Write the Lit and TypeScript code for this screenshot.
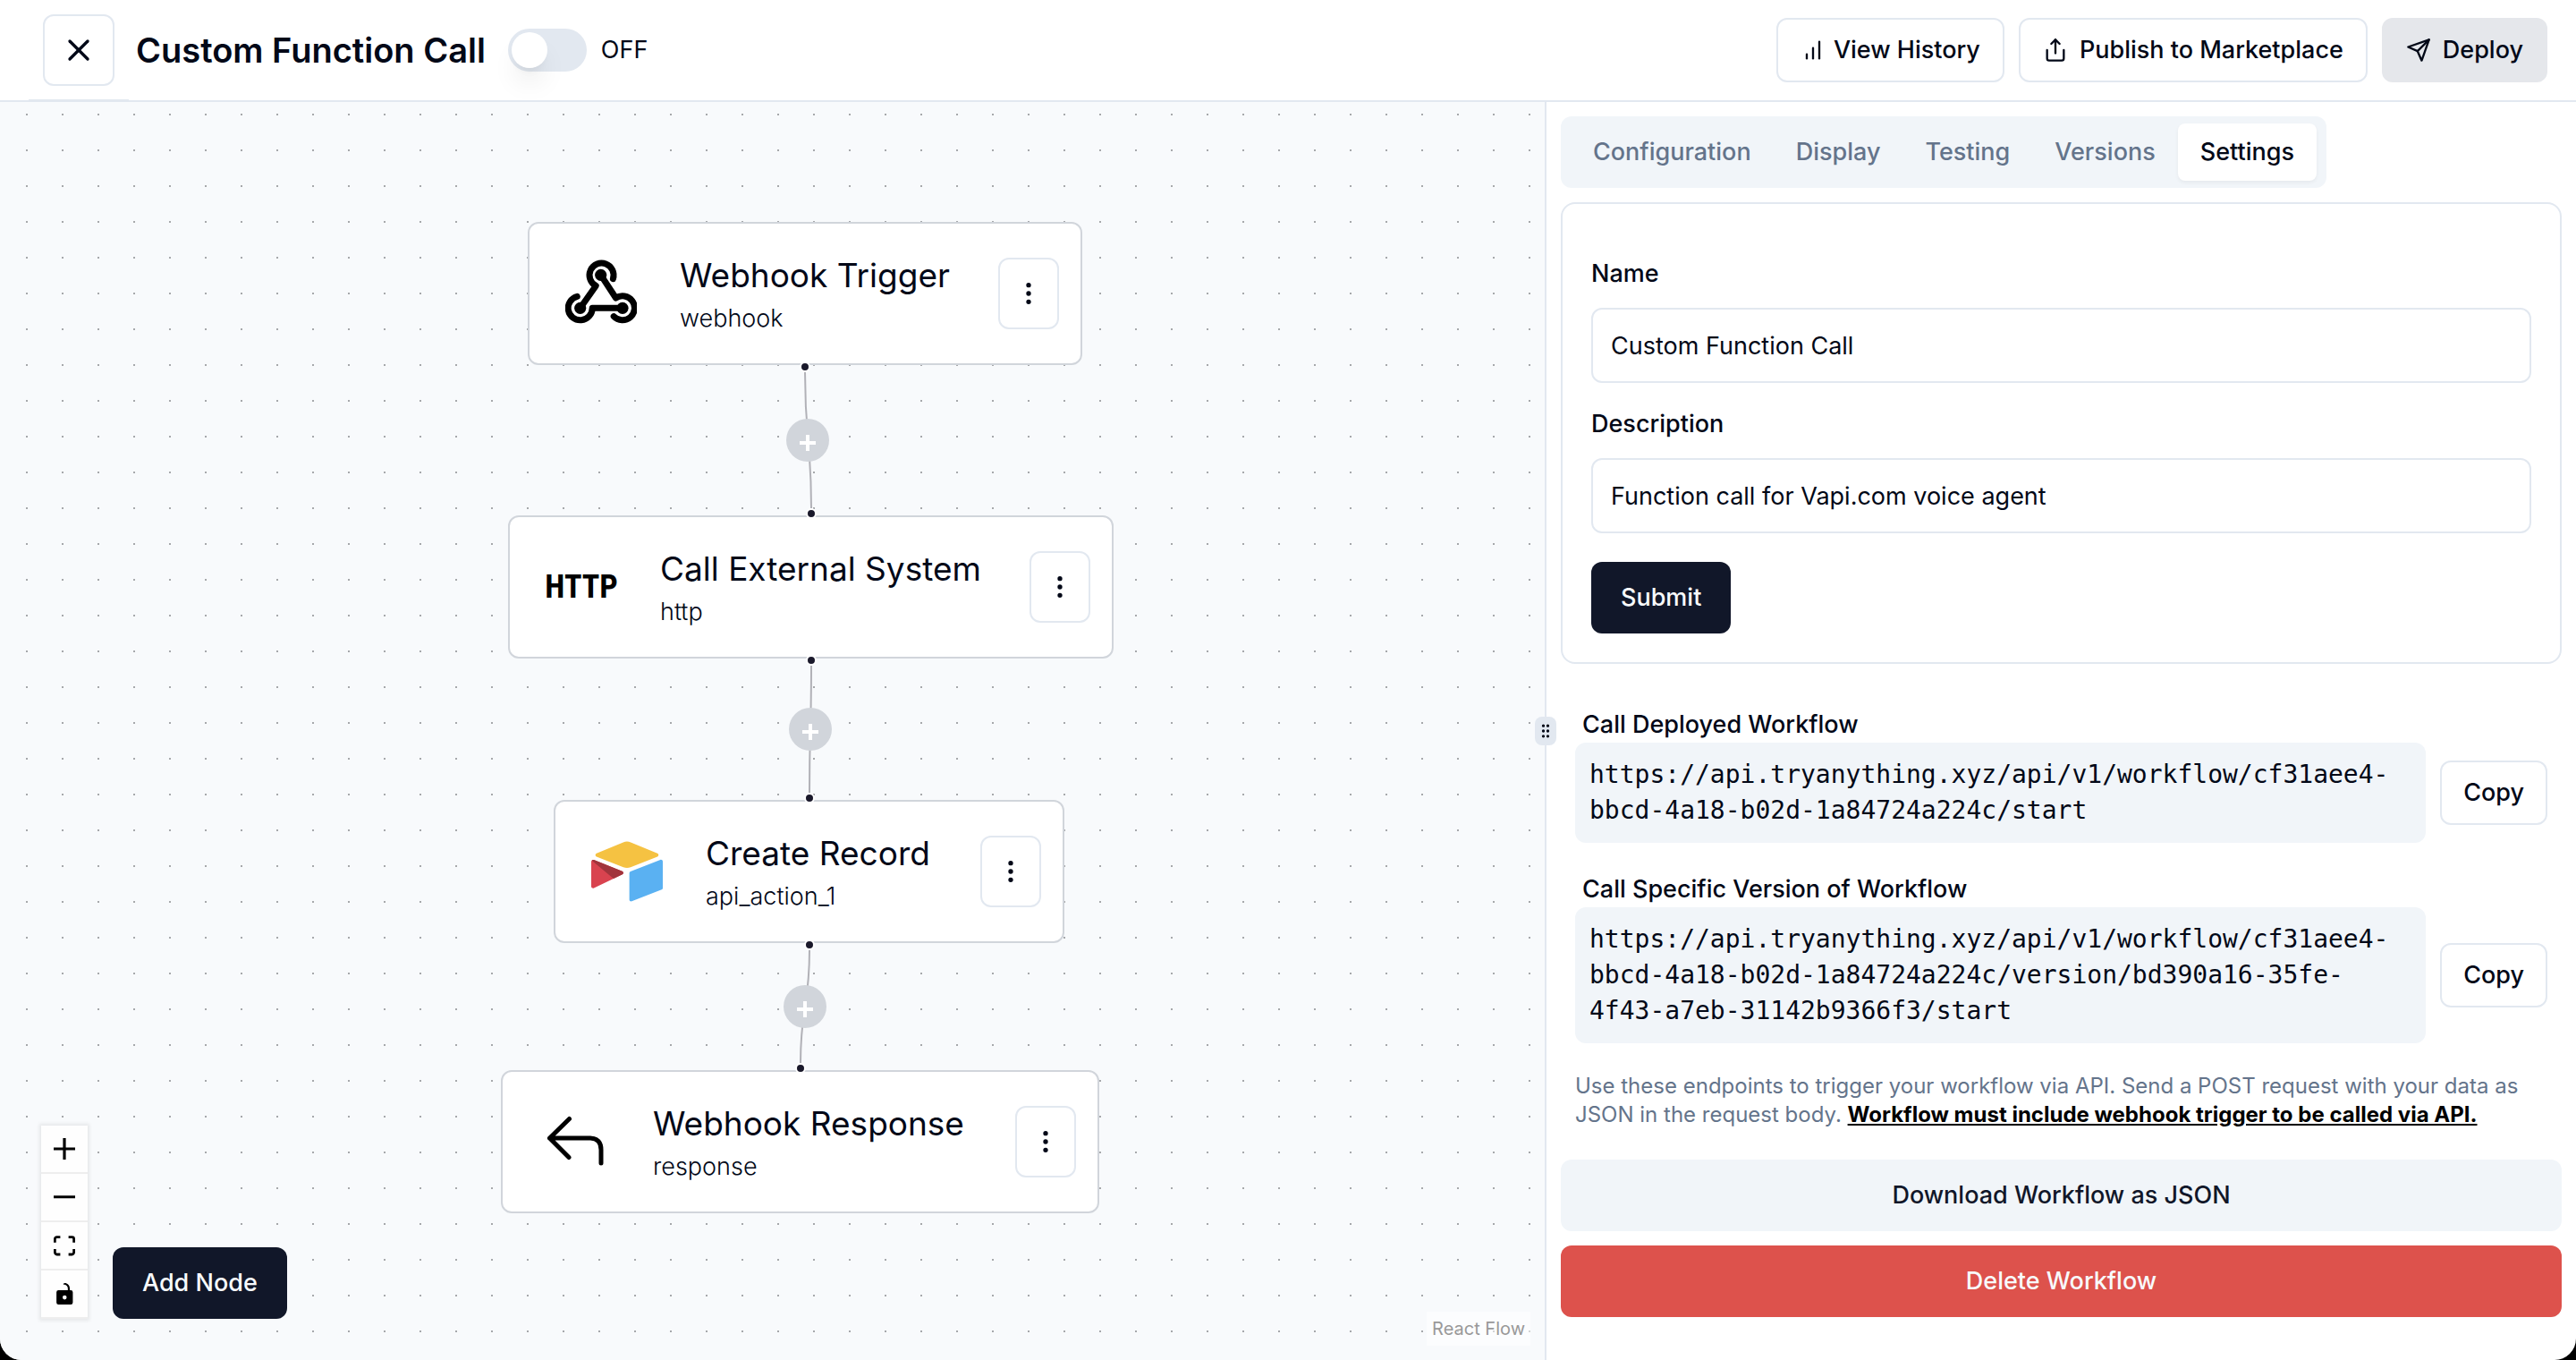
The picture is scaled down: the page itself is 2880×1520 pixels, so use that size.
import { LitElement, html, css, svg, nothing } from "lit";
import { customElement, property, state } from "lit/decorators.js";
import { styleMap } from "lit/directives/style-map.js";
import { classMap } from "lit/directives/class-map.js";

type NodeKind = "webhook" | "http" | "airtable" | "response";

interface FlowNode {
  kind: NodeKind;
  title: string;
  id: string;
  x: number;
  y: number;
  width: number;
}

interface FlowEdge {
  x1: number;
  y1: number;
  x2: number;
  y2: number;
}

const NODES: FlowNode[] = [
  { kind: "webhook", title: "Webhook Trigger", id: "webhook", x: 590, y: 134, width: 620 },
  { kind: "http", title: "Call External System", id: "http", x: 568, y: 462, width: 677 },
  { kind: "airtable", title: "Create Record", id: "api_action_1", x: 619, y: 780, width: 571 },
  { kind: "response", title: "Webhook Response", id: "response", x: 560, y: 1082, width: 669 },
];

const EDGES: FlowEdge[] = [
  { x1: 900, y1: 296, x2: 907, y2: 460 },
  { x1: 907, y1: 624, x2: 905, y2: 778 },
  { x1: 905, y1: 942, x2: 895, y2: 1080 },
];

const TABS = ["Configuration", "Display", "Testing", "Versions", "Settings"];

const resets = css`
  * {
    box-sizing: border-box;
  }
  button,
  input {
    font: inherit;
    color: inherit;
    margin: 0;
  }
  button {
    cursor: pointer;
    border: 0;
    padding: 0;
    background: none;
  }
  svg {
    display: block;
    flex: none;
  }
`;

const stroked = (size: number, body: unknown) => html`
  <svg width=${size} height=${size} viewBox="0 0 24 24" fill="none" stroke="currentColor"
    stroke-width="2" stroke-linecap="round" stroke-linejoin="round" aria-hidden="true">${body}</svg>
`;

const icons = {
  close: () => stroked(40, svg`<path d="M18 6 6 18"/><path d="m6 6 12 12"/>`),
  history: () => stroked(28, svg`<path d="M12 20V10"/><path d="M18 20V4"/><path d="M6 20v-4"/>`),
  publish: () =>
    stroked(28, svg`<path d="M4 12v8a2 2 0 0 0 2 2h12a2 2 0 0 0 2-2v-8"/><path d="m16 6-4-4-4 4"/><path d="M12 2v13"/>`),
  deploy: () => stroked(28, svg`<path d="m22 2-7 20-4-9-9-4Z"/><path d="M22 2 11 13"/>`),
  more: () =>
    stroked(32, svg`<circle cx="12" cy="12" r="1"/><circle cx="12" cy="5" r="1"/><circle cx="12" cy="19" r="1"/>`),
  grip: () =>
    stroked(20, svg`<circle cx="9" cy="12" r="1"/><circle cx="9" cy="5" r="1"/><circle cx="9" cy="19" r="1"/><circle cx="15" cy="12" r="1"/><circle cx="15" cy="5" r="1"/><circle cx="15" cy="19" r="1"/>`),
};

const webhookIcon = html`
  <svg width="80" height="80" viewBox="0 0 80 80" fill="none" stroke="#000" stroke-width="7"
    stroke-linecap="round" stroke-linejoin="round" aria-hidden="true">
    <path d="M53.4 23.6A13.5 13.5 0 1 0 34.2 31.4L16.7 56.3" />
    <path d="M39.7 19.3 56.5 45A13.5 13.5 0 1 1 54.2 65.6" />
    <path d="M64 56.3H30.2A13.5 13.5 0 1 1 13.3 43.3" />
    <circle cx="39.7" cy="19.3" r="6.6" fill="#000" stroke="none" />
    <circle cx="16.7" cy="56.3" r="6.6" fill="#000" stroke="none" />
    <circle cx="64" cy="56.3" r="6.6" fill="#000" stroke="none" />
  </svg>
`;

const airtableIcon = html`
  <svg width="80" height="68" viewBox="11 10 177 149" aria-hidden="true">
    <path fill="#f5c242" d="M90.04 12.37 24.08 39.66c-3.67 1.52-3.63 6.73.06 8.19l66.24 26.27c5.82 2.3 12.3 2.3 18.12 0l66.23-26.27c3.69-1.46 3.73-6.67.06-8.19l-65.96-27.29c-6.02-2.49-12.78-2.49-18.79 0" />
    <path fill="#5ab1f2" d="M105.31 88.46v65.62c0 3.12 3.15 5.25 6.05 4.1l73.81-28.64a4.42 4.42 0 0 0 2.79-4.11V59.81c0-3.12-3.15-5.25-6.05-4.1L108.1 84.35a4.42 4.42 0 0 0-2.79 4.11" />
    <path fill="#d9434f" d="m88.08 91.85-21.9 10.57-2.23 1.08-46.24 22.15c-2.93 1.41-6.67-.72-6.67-3.98V60.09c0-1.18.6-2.2 1.42-2.96.34-.34.72-.62 1.12-.84 1.1-.67 2.68-.84 4.02-.31l70.11 27.78c3.56 1.41 3.84 6.41.37 8.09" />
    <path fill="#a1343c" d="m88.08 91.85-21.9 10.57-53.72-45.29c.34-.34.72-.62 1.12-.84 1.1-.67 2.68-.84 4.02-.31l70.11 27.78c3.56 1.41 3.84 6.41.37 8.09" />
  </svg>
`;

const responseIcon = html`
  <svg width="80" height="80" viewBox="0 0 80 80" fill="none" stroke="#000" stroke-width="5"
    stroke-linecap="round" stroke-linejoin="round" aria-hidden="true">
    <path d="M34.5 14.5 12.5 36 34 57.5M12.5 36H58C66 36 70 41 70 49V64" />
  </svg>
`;

@customElement("flow-node")
export class FlowNodeElement extends LitElement {
  @property({ attribute: false }) node!: FlowNode;

  static styles = [
    resets,
    css`
      :host {
        display: block;
      }
      .node {
        display: flex;
        align-items: center;
        height: 160px;
        padding: 0 24px 0 40px;
        border: 2px solid #d1d5db;
        border-radius: 12px;
        background: #fff;
      }
      .art {
        width: 80px;
        display: flex;
        justify-content: center;
        flex: none;
      }
      .wordmark {
        font: 700 36px/40px "Liberation Sans Narrow", "Roboto Condensed", sans-serif;
        color: #000;
      }
      .text {
        flex: 1;
        min-width: 0;
        margin-left: 48px;
        white-space: nowrap;
      }
      .title {
        margin: 0;
        font-size: 37px;
        line-height: 56px;
        font-weight: 400;
      }
      .id {
        margin: 0;
        font-weight: 300;
        line-height: 40px;
      }
      .more {
        width: 68px;
        height: 80px;
        display: grid;
        place-items: center;
        border: 2px solid #e2e8f0;
        border-radius: 12px;
        background: #fff;
      }
    `,
  ];

  private art(kind: NodeKind) {
    switch (kind) {
      case "webhook":
        return webhookIcon;
      case "http":
        return html`<span class="wordmark">HTTP</span>`;
      case "airtable":
        return airtableIcon;
      case "response":
        return responseIcon;
      default:
        return nothing;
    }
  }

  render() {
    return html`
      <article class="node">
        <div class="art">${this.art(this.node.kind)}</div>
        <div class="text">
          <h2 class="title">${this.node.title}</h2>
          <p class="id">${this.node.id}</p>
        </div>
        <button class="more" type="button" aria-label="Node options">${icons.more()}</button>
      </article>
    `;
  }
}

@customElement("flow-canvas")
export class FlowCanvas extends LitElement {
  static styles = [
    resets,
    css`
      :host {
        display: block;
        position: relative;
        overflow: hidden;
        background: #f8fafc;
      }
      .layer {
        position: absolute;
        inset: 0;
        width: 100%;
        height: 100%;
        pointer-events: none;
      }
      .placed {
        position: absolute;
      }
      .add {
        position: absolute;
        width: 48px;
        height: 48px;
        border-radius: 50%;
        background: #d1d5db;
        color: #fff;
        display: grid;
        place-items: center;
        transform: translate(-50%, -50%);
      }
      .dock {
        position: absolute;
        left: 46px;
        bottom: 46px;
        display: flex;
        align-items: flex-end;
        gap: 28px;
      }
      .controls {
        display: flex;
        flex-direction: column;
        box-shadow: 0 0 4px 2px rgba(0, 0, 0, 0.08);
      }
      .control {
        width: 52px;
        height: 54px;
        display: grid;
        place-items: center;
        background: #fefefe;
        border-bottom: 2px solid #eee;
      }
      .add-node {
        height: 80px;
        padding: 0 33px;
        border-radius: 12px;
        background: #111729;
        color: #f8fafc;
        font-weight: 500;
      }
      .credit {
        position: absolute;
        right: 16px;
        bottom: 16px;
        padding: 4px 6px;
        background: rgba(255, 255, 255, 0.5);
        font-size: 20px;
        line-height: 30px;
        color: #999;
        text-decoration: none;
      }
    `,
  ];

  render() {
    return html`
      <svg class="layer" aria-hidden="true">
        <defs>
          <pattern id="dots" width="40" height="40" patternUnits="userSpaceOnUse">
            <rect x="29" y="13" width="2" height="2" fill="#a6a8ab" />
          </pattern>
        </defs>
        <rect width="100%" height="100%" fill="url(#dots)" />
        ${EDGES.map((e) => {
          const mid = (e.y1 + e.y2) / 2;
          return svg`<path fill="none" stroke="#b1b1b7" stroke-width="2"
            d="M${e.x1} ${e.y1 + 6}C${e.x1} ${mid} ${e.x2} ${mid} ${e.x2} ${e.y2 - 6}"/>`;
        })}
      </svg>
      ${NODES.map(
        (n) => html`<flow-node class="placed" .node=${n}
          style=${styleMap({ left: `${n.x}px`, top: `${n.y}px`, width: `${n.width}px` })}></flow-node>`,
      )}
      <svg class="layer" aria-hidden="true">
        ${EDGES.map((e) =>
          [
            [e.x1, e.y1],
            [e.x2, e.y2],
          ].map(([x, y]) => svg`<circle cx=${x} cy=${y} r="5" fill="#1a192b" stroke="#fff" stroke-width="2"/>`),
        )}
      </svg>
      ${EDGES.map(
        (e) => html`<button class="add" type="button" aria-label="Insert node"
          style=${styleMap({ left: `${Math.floor((e.x1 + e.x2) / 2)}px`, top: `${Math.round((e.y1 + e.y2) / 2)}px` })}>
          <svg width="18" height="24" viewBox="0 0 18 24" aria-hidden="true">
            <path d="M7 6h4v7h7v4h-7v7H7v-7H0v-4h7z" fill="#fff" />
          </svg>
        </button>`,
      )}
      <div class="dock">
        <div class="controls">
          <button class="control" type="button" aria-label="Zoom in">
            <svg width="24" height="24" viewBox="0 0 32 32"><path d="M32 18.133H18.133V32h-4.266V18.133H0v-4.266h13.867V0h4.266v13.867H32z" /></svg>
          </button>
          <button class="control" type="button" aria-label="Zoom out">
            <svg width="24" height="4" viewBox="0 0 32 5"><path d="M0 0h32v4.2H0z" /></svg>
          </button>
          <button class="control" type="button" aria-label="Fit view">
            <svg width="24" height="23" viewBox="0 0 32 30"><path d="M3.692 4.63c0-.53.4-.938.939-.938h5.215V0H4.708C2.13 0 0 2.054 0 4.63v5.216h3.692V4.631zM27.354 0h-5.2v3.692h5.17c.53 0 .984.4.984.939v5.215H32V4.631A4.624 4.624 0 0027.354 0zm.954 24.83c0 .532-.4.94-.939.94h-5.215v3.768h5.215c2.577 0 4.631-2.13 4.631-4.707v-5.139h-3.692v5.139zm-23.677.94c-.531 0-.939-.4-.939-.94v-5.138H0v5.139c0 2.577 2.13 4.707 4.708 4.707h5.138V25.77H4.631z" /></svg>
          </button>
          <button class="control" type="button" aria-label="Toggle interactivity">
            <svg width="19" height="24" viewBox="0 0 25 32"><path d="M21.333 10.667H19.81V7.619C19.81 3.429 16.38 0 12.19 0c-4.114 1.828-1.37 2.133.305 2.438 1.676.305 4.42 2.59 4.42 5.181v3.048H3.047A3.056 3.056 0 000 13.714v15.238A3.056 3.056 0 003.048 32h18.285a3.056 3.056 0 003.048-3.048V13.714a3.056 3.056 0 00-3.048-3.047zM12.19 24.533a3.056 3.056 0 01-3.047-3.047 3.056 3.056 0 013.047-3.048 3.056 3.056 0 013.048 3.048 3.056 3.056 0 01-3.048 3.047z" /></svg>
          </button>
        </div>
        <button class="add-node" type="button">Add Node</button>
      </div>
      <a class="credit" href="#reactflow">React Flow</a>
    `;
  }
}

@customElement("settings-panel")
export class SettingsPanel extends LitElement {
  @state() private tab = "Settings";

  static styles = [
    resets,
    css`
      :host {
        display: block;
        background: #fff;
      }
      .panel {
        display: flex;
        flex-direction: column;
        align-items: stretch;
        padding: 16px;
      }
      .tabs {
        align-self: flex-start;
        display: flex;
        padding: 8px 11px;
        border-radius: 12px;
        background: #f1f5f9;
      }
      .tab {
        height: 64px;
        padding: 0 25px;
        border-radius: 8px;
        font-weight: 500;
        color: #64748b;
      }
      .tab.active {
        background: #fff;
        color: #020817;
        box-shadow: 0 2px 4px rgba(0, 0, 0, 0.05);
      }
      .card {
        display: flex;
        flex-direction: column;
        align-items: flex-start;
        gap: 32px;
        margin: 16px 0 0;
        padding: 64px 32px 32px;
        border: 2px solid #e2e8f0;
        border-radius: 16px;
      }
      .field {
        width: 100%;
        display: flex;
        flex-direction: column;
        gap: 24px;
      }
      .label {
        line-height: 28px;
        font-weight: 500;
      }
      .input {
        width: 100%;
        height: 84px;
        padding: 0 20px;
        border: 2px solid #e2e8f0;
        border-radius: 12px;
        background: #fff;
      }
      .submit {
        height: 80px;
        padding: 0 33px;
        border-radius: 12px;
        background: #111729;
        color: #f8fafc;
        font-weight: 500;
      }
      .endpoints {
        display: flex;
        flex-direction: column;
        gap: 36px;
        padding: 52px 16px 32px;
      }
      .endpoint-label {
        margin: 0 0 4px 8px;
        line-height: 32px;
        font-weight: 500;
        font-size: 27px;
      }
      .row {
        display: flex;
        align-items: center;
        gap: 16px;
      }
      .url {
        flex: 1;
        padding: 16px;
        border-radius: 12px;
        background: #f1f5f9;
        font: 28px/40px "DejaVu Sans Mono", monospace;
      }
      .copy {
        height: 72px;
        padding: 0 24px;
        border: 2px solid #e2e8f0;
        border-radius: 12px;
        background: #fff;
        font-weight: 500;
      }
      .note {
        margin: 0 0 34px;
        padding: 0 16px;
        font-size: 24px;
        line-height: 32px;
        color: #64748b;
      }
      .strong {
        color: #000;
        font-weight: 700;
        text-decoration: underline;
      }
      .wide {
        height: 80px;
        border-radius: 12px;
        font-weight: 500;
        background: #f1f5f9;
        color: #111729;
      }
      .danger {
        margin-top: 16px;
        background: #dd524c;
        color: #f8fafc;
      }
    `,
  ];

  private endpoint(label: string, url: string) {
    return html`
      <section>
        <h3 class="endpoint-label">${label}</h3>
        <div class="row">
          <code class="url">${url}</code>
          <button class="copy" type="button">Copy</button>
        </div>
      </section>
    `;
  }

  render() {
    return html`
      <div class="panel">
        <div class="tabs" role="tablist">
          ${TABS.map(
            (t) => html`<button type="button" role="tab" aria-selected=${t === this.tab}
              class=${classMap({ tab: true, active: t === this.tab })}
              @click=${() => (this.tab = t)}>${t}</button>`,
          )}
        </div>
        <form class="card" @submit=${(e: Event) => e.preventDefault()}>
          <div class="field">
            <label class="label" for="name">Name</label>
            <input class="input" id="name" type="text" .value=${"Custom Function Call"} />
          </div>
          <div class="field">
            <label class="label" for="description">Description</label>
            <input class="input" id="description" type="text" .value=${"Function call for Vapi.com voice agent"} />
          </div>
          <button class="submit" type="submit">Submit</button>
        </form>
        <div class="endpoints">
          ${this.endpoint(
            "Call Deployed Workflow",
            "https://api.tryanything.xyz/api/v1/workflow/cf31aee4-bbcd-4a18-b02d-1a84724a224c/start",
          )}
          ${this.endpoint(
            "Call Specific Version of Workflow",
            "https://api.tryanything.xyz/api/v1/workflow/cf31aee4-bbcd-4a18-b02d-1a84724a224c/version/bd390a16-35fe-4f43-a7eb-31142b9366f3/start",
          )}
        </div>
        <p class="note">
          Use these endpoints to trigger your workflow via API. Send a POST request with your data as JSON in the
          request body.
          <strong class="strong">Workflow must include webhook trigger to be called via API.</strong>
        </p>
        <button class="wide" type="button">Download Workflow as JSON</button>
        <button class="wide danger" type="button">Delete Workflow</button>
      </div>
    `;
  }
}

@customElement("app-root")
export class AppRoot extends LitElement {
  @state() private live = false;

  static styles = [
    resets,
    css`
      :host {
        display: block;
        background: #000;
        color: #020817;
        font: 400 27px/40px Inter, "Liberation Sans", sans-serif;
      }
      .window {
        display: flex;
        flex-direction: column;
        min-height: 100vh;
        background: #fff;
        border-radius: 0 0 24px 24px;
        overflow: hidden;
      }
      .header {
        display: flex;
        align-items: center;
        height: 114px;
        padding: 0 32px;
        border-bottom: 2px solid #e2e8f0;
      }
      .exit {
        width: 112px;
        height: 112px;
        display: grid;
        place-items: center;
        border-bottom: 1px solid #e2e8f0;
      }
      .close {
        width: 80px;
        height: 80px;
        display: grid;
        place-items: center;
        border: 2px solid #e2e8f0;
        border-radius: 12px;
      }
      .title {
        margin: 0 25px 0 8px;
        font-size: 38px;
        line-height: 56px;
        font-weight: 600;
        white-space: nowrap;
      }
      .toggle {
        display: flex;
        align-items: center;
        gap: 16px;
      }
      .switch {
        appearance: none;
        width: 88px;
        height: 48px;
        padding: 4px;
        border-radius: 24px;
        background: #e2e8f0;
      }
      .switch::before {
        content: "";
        display: block;
        width: 40px;
        height: 40px;
        border-radius: 50%;
        background: #fff;
        box-shadow: 0 20px 30px -6px rgba(0, 0, 0, 0.1), 0 8px 12px -8px rgba(0, 0, 0, 0.1);
      }
      .switch:checked {
        background: #111729;
      }
      .switch:checked::before {
        margin-left: 40px;
      }
      .actions {
        display: flex;
        gap: 16px;
        margin-left: auto;
      }
      .action {
        height: 72px;
        display: flex;
        align-items: center;
        gap: 13px;
        padding: 0 25px;
        border: 2px solid #e2e8f0;
        border-radius: 12px;
        background: #fff;
        font-weight: 500;
        white-space: nowrap;
      }
      .action.tight {
        gap: 9px;
      }
      .action.muted {
        background: #e5e7eb;
        border-color: #e5e7eb;
      }
      .body {
        flex: 1;
        display: grid;
        grid-template-columns: calc(60% - 1px) 1fr;
      }
      .side {
        position: relative;
        min-width: 0;
        border-left: 2px solid #e2e8f0;
      }
      .resize {
        position: absolute;
        left: -13px;
        top: 50%;
        width: 24px;
        height: 32px;
        display: grid;
        place-items: center;
        border-radius: 8px;
        background: #e2e8f0;
        transform: translateY(-50%);
        cursor: col-resize;
      }
    `,
  ];

  render() {
    return html`
      <div class="window">
        <header class="header">
          <div class="exit">
            <button class="close" type="button" aria-label="Close">${icons.close()}</button>
          </div>
          <h1 class="title">Custom Function Call</h1>
          <div class="toggle">
            <input class="switch" id="live" type="checkbox" role="switch" .checked=${this.live}
              @change=${(e: Event) => (this.live = (e.target as HTMLInputElement).checked)} />
            <label for="live">${this.live ? "ON" : "OFF"}</label>
          </div>
          <div class="actions">
            <button class="action tight" type="button">${icons.history()}View History</button>
            <button class="action" type="button">${icons.publish()}Publish to Marketplace</button>
            <button class="action muted" type="button">${icons.deploy()}Deploy</button>
          </div>
        </header>
        <main class="body">
          <flow-canvas></flow-canvas>
          <div class="side">
            <settings-panel></settings-panel>
            <button class="resize" type="button" aria-label="Resize panel">${icons.grip()}</button>
          </div>
        </main>
      </div>
    `;
  }
}
